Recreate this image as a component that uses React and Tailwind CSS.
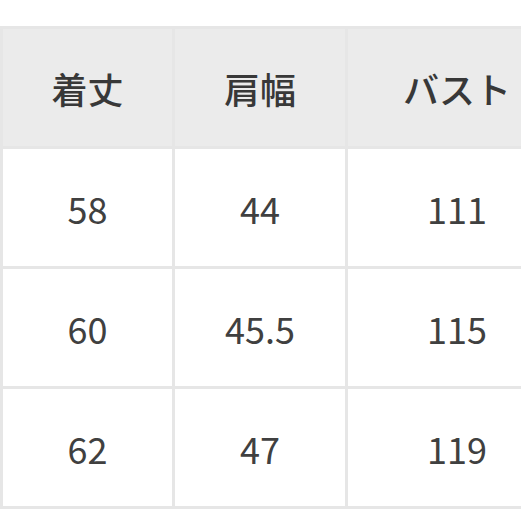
const HEADERS = ['着丈', '肩幅', 'バスト'];
const ROWS = [
  ['58', '44', '111'],
  ['60', '45.5', '115'],
  ['62', '47', '119'],
];

export default function App() {
  return (
    <div className="w-[521px] h-[521px] overflow-hidden bg-white pt-[26px]" style={{ fontFamily: '"Noto Sans CJK JP", "Noto Sans", sans-serif' }}>
      <div className="w-[566px] bg-[#e6e6e6] p-[3px]">
        <div className="grid grid-cols-[169px_170px_218px] gap-[3px]">
          {HEADERS.map(h => (
            <div key={h} className="h-[117px] bg-[#ebebeb] flex items-center justify-center text-[36px] font-medium text-[#383838]">
              {h}
            </div>
          ))}
          {ROWS.flat().map((v, i) => (
            <div key={i} className="h-[117px] bg-white flex items-center justify-center text-[36px] text-[#404040]">
              {v}
            </div>
          ))}
        </div>
      </div>
    </div>
  );
}
